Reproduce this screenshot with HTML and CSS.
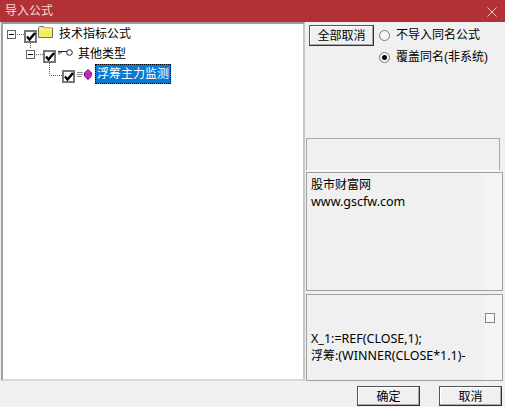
FILE: index.html
```html
<!DOCTYPE html>
<html lang="zh">
<head>
<meta charset="utf-8">
<title>导入公式</title>
<link rel="stylesheet" href="styles.css">
</head>
<body>
<div class="dialog">
  <header class="titlebar">
    <span class="title">导入公式</span>
    <svg class="close" width="10" height="10" viewBox="0 0 10 10"><path d="M.5.5l9 9M9.500.5l-9 9" stroke="#e9c9ca" stroke-width="1" fill="none"/></svg>
  </header>
  <main class="content">
    <section class="tree">
      <div class="row row-1">
        <span class="expander"></span><span class="dots"></span>
        <span class="check"><svg width="10" height="9" viewBox="0 0 10 9"><path d="M1 4.500l2.500 3L9 1" stroke="#000" stroke-width="2.400" fill="none"/></svg></span>
        <svg class="icon icon-folder" width="15" height="12" viewBox="0 0 15 12"><path d="M.5 11.500V1.500l1-1h4l1 1.500h8v9.500z" fill="#f5ec62" stroke="#77715a"/><path d="M2 3h12" stroke="#fffbc8"/></svg>
        <span class="label">技术指标公式</span>
      </div>
      <div class="row row-2">
        <span class="expander light"></span><span class="dots"></span>
        <span class="check"><svg width="10" height="9" viewBox="0 0 10 9"><path d="M1 4.500l2.500 3L9 1" stroke="#000" stroke-width="2.400" fill="none"/></svg></span>
        <svg class="icon icon-key" width="15" height="7" viewBox="0 0 15 7"><circle cx="11.500" cy="3.500" r="2.800" fill="#fff" stroke="#222"/><path d="M0 2.500h9M1 2.500v3M3 2.500v2" stroke="#222" fill="none"/></svg>
        <span class="label">其他类型</span>
      </div>
      <div class="row row-3">
        <span class="check"><svg width="10" height="9" viewBox="0 0 10 9"><path d="M1 4.500l2.500 3L9 1" stroke="#000" stroke-width="2.400" fill="none"/></svg></span>
        <svg class="icon icon-gem" width="15" height="11" viewBox="0 0 15 11"><path d="M0 3.500h6M0 5.500h6M0 7.500h5" stroke="#888"/><path d="M11 .5l3.500 3.500-.5 3.500-3 3-3.500-3.500v-3z" fill="#e81ee0" stroke="#441844"/><path d="M8 4l3 1.500 3-1.500M11 5.500v5" stroke="#8a1488" stroke-width=".6" fill="none"/></svg>
        <span class="label selected">浮筹主力监测</span>
      </div>
      <svg class="lines" width="70" height="70" viewBox="0 0 70 70"><path d="M27.500 19v6M46.500 39v12.500H59" stroke="#555" stroke-dasharray="1 1" fill="none"/></svg>
    </section>
    <aside class="side">
      <div class="controls">
        <button class="btn btn-all" type="button">全部取消</button>
        <div class="radios">
          <label class="radio"><span class="dot"></span>不导入同名公式</label>
          <label class="radio"><span class="dot on"></span>覆盖同名(非系统)</label>
        </div>
      </div>
      <div class="strip"></div>
      <div class="box box-info">
        <p><span class="cjk">股市财富网</span></p>
        <p>www.gscfw.com</p>
      </div>
      <div class="box box-code">
        <span class="minicheck"></span>
        <p>X_1:=REF(CLOSE,1);</p>
        <p><span class="cjk">浮筹</span>:(WINNER(CLOSE*1.1)-</p>
      </div>
    </aside>
  </main>
  <footer class="footer">
    <button class="btn btn-ok" type="button">确定</button>
    <button class="btn btn-cancel" type="button">取消</button>
  </footer>
</div>
</body>
</html>
```
FILE: styles.css
```css
* { box-sizing: border-box; }
html, body { margin: 0; padding: 0; }
body {
  width: 505px;
  height: 407px;
  overflow: hidden;
  background: #f0f0f0;
  color: #000;
  font: 12px/18px "Liberation Sans", "Noto Sans CJK SC", sans-serif;
}
.dialog { display: flex; flex-direction: column; height: 407px; }
.titlebar {
  height: 22px;
  flex: none;
  background: #b23136;
  color: #f3dcdc;
  display: flex;
  align-items: center;
  justify-content: space-between;
  padding: 0 8px 0 5px;
  font-size: 12px;
}
.close { margin-top: 2px; }
.content { display: flex; flex: none; height: 359px; padding-left: 1px; }
.tree {
  position: relative;
  width: 304px;
  background: #fff;
  border: 2px solid #a0a0a0;
  border-right-color: #c8c8c8;
  border-bottom-color: #d8d8d8;
  border-top: 2px solid #9a9a9a;
  padding-top: 3px;
}
.row { display: flex; align-items: flex-start; height: 20px; white-space: nowrap; }
.row-1 { padding-left: 4px; }
.row-2 { padding-left: 23px; }
.row-3 { padding-left: 59px; }
.expander {
  position: relative;
  flex: none;
  width: 9px;
  height: 9px;
  margin-top: 3px;
  border: 1px solid #666;
  background: #fff;
}
.expander::after {
  content: "";
  position: absolute;
  left: 1px;
  top: 3px;
  width: 5px;
  height: 1px;
  background: #000;
}
.dots { flex: none; width: 7px; margin: 7px 0 0 1px; border-top: 1px dotted #666; }
.check {
  width: 13px;
  height: 13px;
  margin-top: 3px;
  border: 2px solid #777;
  background: #fff;
  display: flex;
  align-items: center;
  justify-content: center;
  flex: none;
}
.check svg { display: block; flex: none; }
.icon { flex: none; }
.icon-folder { margin: -1px 0 0 1px; }
.icon-key { margin: 2px 0 0 2px; }
.icon-gem { margin: 2px 0 0 2px; }
.label { height: 20px; line-height: 20px; margin: -3px 0 0 5px; padding: 0 1px; }
.row-2 .label { margin-left: 4px; }
.row-3 .label { margin-left: 3px; }
.selected {
  background: #0a78d4;
  color: #fff;
  outline: 1px dotted #000;
  outline-offset: -1px;
  padding: 0 2px;
}
.lines { position: absolute; left: 0; top: 0; pointer-events: none; }
.side { width: 199px; margin-left: 1px; display: flex; flex-direction: column; }
.controls { display: flex; height: 114px; padding: 3px 0 0 3px; }
.btn {
  font: 12px "Liberation Sans", "Noto Sans CJK SC", sans-serif;
  color: #000;
  background: #f0f0f0;
  border: 1px solid #555;
  border-right-color: #333;
  border-bottom-color: #333;
  box-shadow: inset -1px -1px 0 #a8a8a8, inset 1px 1px 0 #fff;
  padding: 0 0 2px;
}
.btn-all { width: 65px; height: 21px; }
.radios { margin-left: 5px; display: flex; flex-direction: column; gap: 4px; margin-top: 1px; }
.radio { display: flex; align-items: center; height: 18px; white-space: nowrap; }
.dot {
  width: 11px;
  height: 11px;
  border-radius: 50%;
  border: 1px solid #777;
  background: #f8f8f8;
  margin-right: 6px;
  position: relative;
}
.dot.on::after {
  content: "";
  position: absolute;
  left: 2px;
  top: 2px;
  width: 5px;
  height: 5px;
  border-radius: 50%;
  background: #000;
}
.strip {
  height: 33px;
  width: 194px;
  border: 1px solid #a8a8a8;
  border-bottom: 1px solid #fff;
  margin-top: 2px;
}
.box {
  width: 197px;
  border: 1px solid #a0a0a0;
  padding: 3px 4px 0;
  position: relative;
  background: linear-gradient(to right, #f0f0f0 178px, #f5f4f2 178px);
  font: 12.5px/17px "Noto Sans", "Noto Sans CJK SC", sans-serif;
}
.box p { margin: 0; white-space: nowrap; }
.cjk { font-size: 12px; }
.box-info { height: 119px; margin-top: 1px; }
.box-code { height: 87px; margin-top: 3px; padding-top: 35px; }
.minicheck {
  position: absolute;
  right: 7px;
  top: 18px;
  width: 10px;
  height: 10px;
  border: 1px solid #888;
  background: #f8f8f8;
}
.footer { flex: none; height: 26px; display: flex; justify-content: flex-end; gap: 19px; padding: 5px 3px 0 0; }
.btn-ok, .btn-cancel { width: 63px; height: 20px; }
```
